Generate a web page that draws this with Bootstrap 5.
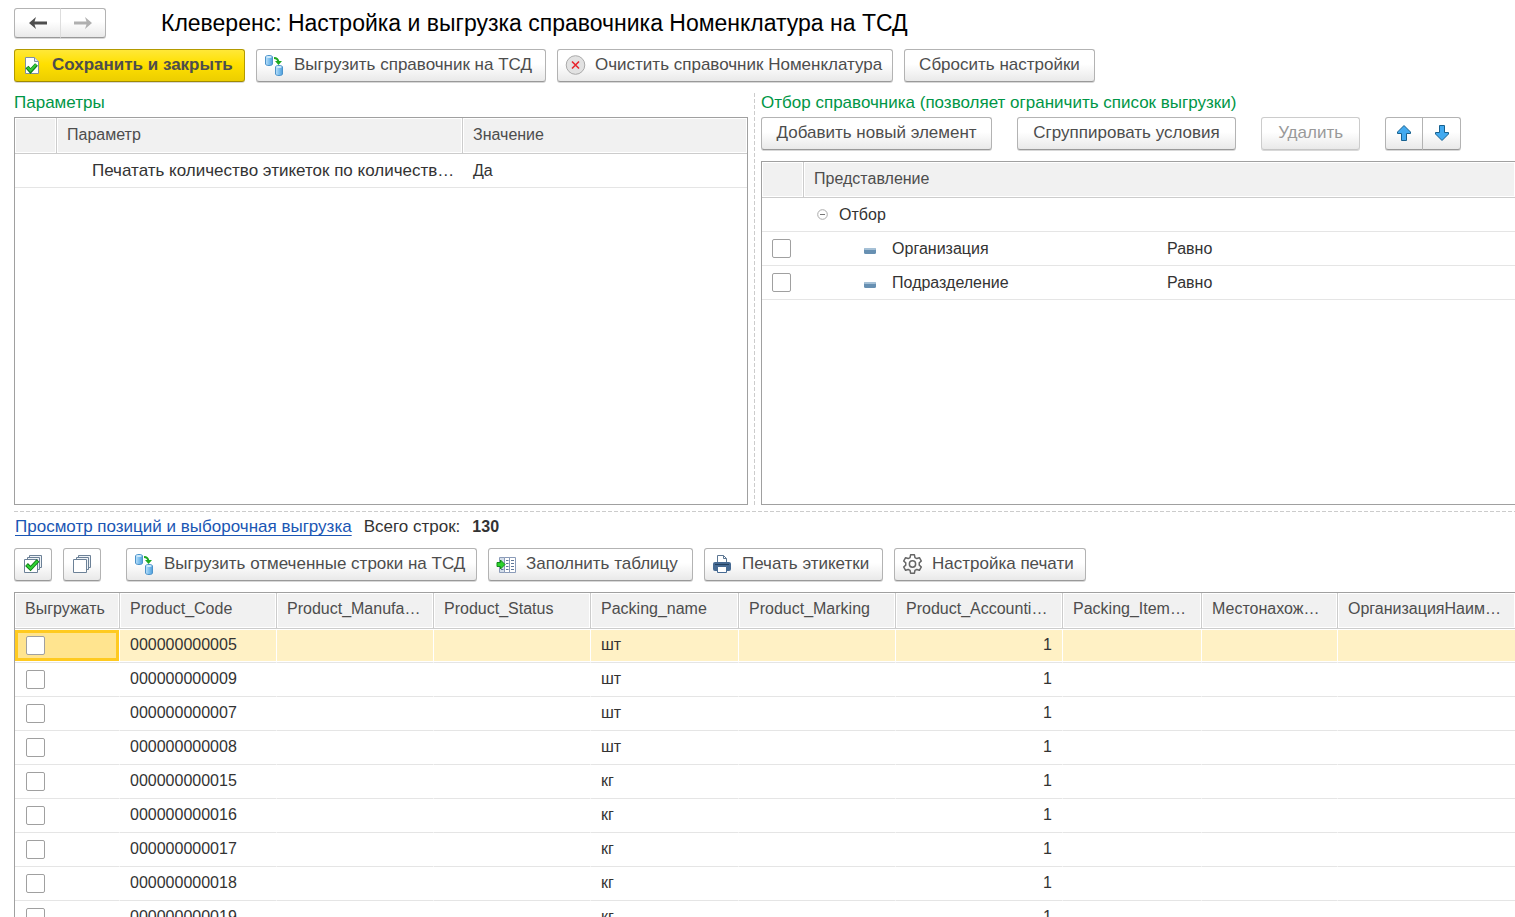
<!DOCTYPE html>
<html lang="ru">
<head>
<meta charset="utf-8">
<meta name="viewport" content="width=device-width, initial-scale=1">
<title>Клеверенс: Настройка и выгрузка справочника Номенклатура на ТСД</title>
<link href="https://cdn.jsdelivr.net/npm/bootstrap@5.3.0/dist/css/bootstrap.min.css" rel="stylesheet">
<style>
  body { font-family: "Liberation Sans", Arial, sans-serif; font-size: 16px; line-height: 20px; color: #333; background: #fff; }
  .page { padding: 8px 0 0 14px; }
  .page-title { font-size: 23px; line-height: 30px; color: #000; margin-left: 55px; }

  .btn-tool {
    --bs-btn-color: #4d4d4d; --bs-btn-hover-color: #333; --bs-btn-active-color: #333;
    --bs-btn-border-color: #b3b3b3; --bs-btn-hover-border-color: #999;
    --bs-btn-disabled-color: #999; --bs-btn-disabled-border-color: #ccc; --bs-btn-disabled-opacity: 1;
    --bs-btn-border-radius: 3px; --bs-btn-font-size: 17px; --bs-btn-line-height: 20px;
    --bs-btn-padding-x: 8px; --bs-btn-padding-y: 0;
    height: 33px; border-bottom-color: #999; padding-bottom: 1px;
    background: linear-gradient(#fff 45%, #e9e9e9);
    box-shadow: 0 1px 0 #d8d8d8;
    display: inline-flex; align-items: center; justify-content: center; white-space: nowrap;
  }
  .btn-tool:disabled { border-bottom-color: #c6c6c6; }
  .btn-tool svg { flex: none; }
  .with-icon { padding-left: 7px; gap: 9px; justify-content: flex-start; }
  .with-icon svg { width: 21px; height: 22px; }
  .btn-save { --bs-btn-color: #4d4d4d; --bs-btn-border-color: #b39a00; font-weight: 700; border-bottom-color: #a08a00; background: linear-gradient(#ffe838, #ffe000 45%, #ecce00); }
  .btn-nav { width: 47px; height: 30px; padding: 0; }
  .btn-nav + .btn-nav { width: 46px; border-left-color: #ddd; }
  .btn-square { width: 38px; padding: 0 0 1px; }
  .btn-group .btn-square + .btn-square { width: 39px; }
  .btn-square svg { width: 20px; height: 20px; }

  .w-a { min-width: 231px; } .w-b { min-width: 290px; } .w-c { min-width: 336px; } .w-d { min-width: 191px; }
  .w-f { min-width: 219px; } .w-g { min-width: 99px; }
  .w-h { min-width: 351px; } .w-i { min-width: 205px; } .w-j { min-width: 179px; } .w-k { min-width: 192px; }
  .main-tools { margin-top: 11px; }
  .gap-tool { gap: 11px; }
  .gap-wide { gap: 25px; }

  .panes { display: grid; grid-template-columns: 37fr 13px 38fr; margin-top: 11px; }
  .split-v { justify-self: center; width: 1px; background: repeating-linear-gradient(#ccc 0 4px, transparent 4px 6px); }
  .split-h { height: 1px; margin-top: 6px; background: repeating-linear-gradient(90deg, #ccc 0 4px, transparent 4px 6px); }
  .caption-green { color: #009646; font-size: 17px; margin-bottom: 4px; }
  .sheet { border: 1px solid #a0a0a0; overflow: hidden; }
  .sheet-right { border-right: 0; margin-top: 11px; }
  .sheet-params { min-height: 388px; }

  .grid-table { table-layout: fixed; width: 100%; margin: 0; border-collapse: separate; border-spacing: 0; color: #333; }
  .grid-table th, .grid-table td { padding: 0 10px; height: 34px; white-space: nowrap; overflow: hidden; text-overflow: ellipsis; border-bottom: 1px solid #e5e5e5; vertical-align: middle; }
  .grid-table th { height: 36px; padding-bottom: 2px; font-weight: 400; color: #4d4d4d; background: #f1f1f1; border-bottom-color: #ccc; border-right: 1px solid #ccc; box-shadow: inset 0 0 0 1px #fff; }
  .grid-table th:last-child { border-right: 0; }
  .grid-table td.tree-1 { padding-left: 13px; }
  .grid-table td.tree-2 { padding-left: 60px; }
  .grid-table td.indent { padding-left: 35px; padding-right: 0; font-size: 17px; }
  .tree-gap { gap: 11px; }
  .c-mark { width: 42px; }
  .c-param { width: 406px; }
  .c-field { width: 353px; }

  .items td { border-right: 1px solid #fff; }
  .items td:last-child { border-right: 0; }
  .items td:first-child { padding-left: 11px; }
  .items .picked td { background: #fff1c5; box-shadow: inset 0 -1px 0 #fff, inset 0 1px 0 #fff; }
  .items .picked td:first-child { background: #ffe48f; box-shadow: inset 0 1px 0 #fff, inset 0 -1px 0 #fff, inset 0 4px 0 #ffca20, inset 0 -4px 0 #ffca20, inset 0 0 0 3px #ffca20; }
  .items-box { border-bottom: 0; border-right: 0; margin-top: 11px; }
  .k1 { width: 105px; } .k2 { width: 157px; } .k3 { width: 148px; } .k4 { width: 167px; } .k5 { width: 139px; } .k6 { width: 136px; }

  .form-check-input.tick { display: block; float: none; margin: 0; width: 19px; height: 19px; border: 1px solid #a0a0a0; border-radius: 2px; background-color: #fff; }
  .view-link { color: #1a56b4; text-decoration: underline; text-underline-offset: 3px; text-decoration-skip-ink: none; }
  .summary { margin-top: 5px; padding-left: 1px; gap: 12px; font-size: 17px; }
  .summary strong { font-size: 16px; }
  .items-tools { margin-top: 11px; }
  .export-rows { margin-left: 14px; }
  @media (min-width: 1200px) { .page { height: 100vh; overflow: hidden; } }
</style>
</head>
<body>
<svg width="0" height="0" class="position-absolute" aria-hidden="true">
  <defs>
    <linearGradient id="blue" x1="0" x2="1"><stop offset="0" stop-color="#bfe2fa"/><stop offset=".5" stop-color="#7fc0ee"/><stop offset="1" stop-color="#4f9fdc"/></linearGradient>
    <symbol id="i-export" viewBox="0 0 21 22">
      <path d="M1.500 3c0-2 7-2 7 0v7c0 2-7 2-7 0z" fill="url(#blue)" stroke="#4c93ca"/>
      <ellipse cx="5" cy="3" rx="2.800" ry="1" fill="#d3ecfc"/>
      <path d="M11.500 13c0-2 7-2 7 0v7c0 2-7 2-7 0z" fill="url(#blue)" stroke="#4c93ca"/>
      <ellipse cx="15" cy="13" rx="2.800" ry="1" fill="#d3ecfc"/>
      <path d="M10 4c3 0 4 1 4.500 4" fill="none" stroke="#1fa81f" stroke-width="2"/>
      <path d="M11 7h7L14.500 11z" fill="#1fa81f"/>
    </symbol>
  </defs>
</svg>

<main class="page d-flex flex-column">
  <header class="d-flex align-items-center">
    <div class="btn-group" role="group" aria-label="Навигация">
      <button type="button" class="btn btn-tool btn-nav" aria-label="Назад"><svg width="18" height="14" viewBox="0 0 18 14"><path d="M0 7l7-6-1.500 4.500H18v3H5.500L7 13z" fill="#4d4d4d"/></svg></button>
      <button type="button" class="btn btn-tool btn-nav" aria-label="Вперед"><svg width="18" height="14" viewBox="0 0 18 14"><path d="M18 7l-7-6 1.500 4.500H0v3h12.500L11 13z" fill="#b0b0b0"/></svg></button>
    </div>
    <h1 class="page-title mb-0 fw-normal text-nowrap">Клеверенс: Настройка и выгрузка справочника Номенклатура на ТСД</h1>
  </header>

  <div class="d-flex flex-wrap gap-tool main-tools" role="toolbar">
    <button type="button" class="btn btn-tool btn-save with-icon w-a">
      <svg viewBox="0 0 21 22"><path d="M3.500 3.500h9l4 4v12h-13z" fill="#fff" stroke="#8090a0"/><path d="M12.500 3.500v4h4" fill="#dfe6ee" stroke="#8090a0"/><path d="M5 13l3.500 4 6-6.500" fill="none" stroke="#14801c" stroke-width="4"/><path d="M5.500 13.500l3 3 5.500-6" fill="none" stroke="#35c93c" stroke-width="2"/></svg>
      Сохранить и закрыть</button>
    <button type="button" class="btn btn-tool with-icon w-b"><svg><use href="#i-export"/></svg>Выгрузить справочник на ТСД</button>
    <button type="button" class="btn btn-tool with-icon w-c">
      <svg viewBox="0 0 21 22"><circle cx="10.500" cy="11" r="9.300" fill="#e2e2e2" stroke="#aaa"/><path d="M7 7.500l7 7m0-7l-7 7" stroke="#e8252d" stroke-width="1.600"/></svg>
      Очистить справочник Номенклатура</button>
    <button type="button" class="btn btn-tool w-d">Сбросить настройки</button>
  </div>

  <div class="panes">
    <section class="d-flex flex-column">
      <div class="caption-green">Параметры</div>
      <div class="sheet sheet-params flex-grow-1">
        <table class="grid-table">
          <colgroup><col class="c-mark"><col class="c-param"><col></colgroup>
          <thead><tr><th></th><th>Параметр</th><th>Значение</th></tr></thead>
          <tbody><tr><td></td><td class="indent">Печатать количество этикеток по количеств…</td><td>Да</td></tr></tbody>
        </table>
      </div>
    </section>
    <div class="split-v"></div>
    <section class="d-flex flex-column overflow-hidden">
      <div class="caption-green text-nowrap">Отбор справочника (позволяет ограничить список выгрузки)</div>
      <div class="d-flex gap-wide" role="toolbar">
        <button type="button" class="btn btn-tool w-a">Добавить новый элемент</button>
        <button type="button" class="btn btn-tool w-f">Сгруппировать условия</button>
        <button type="button" class="btn btn-tool w-g" disabled>Удалить</button>
        <div class="btn-group" role="group" aria-label="Порядок">
          <button type="button" class="btn btn-tool btn-square" aria-label="Вверх"><svg viewBox="0 0 20 20"><path d="M10 2.500l6.500 6.500v1.500h-4v7h-5v-7h-4V9z" fill="#42aaf0" stroke="#17618f"/></svg></button>
          <button type="button" class="btn btn-tool btn-square" aria-label="Вниз"><svg viewBox="0 0 20 20"><path d="M10 17.500l6.500-6.500V9.500h-4v-7h-5v7h-4V11z" fill="#42aaf0" stroke="#17618f"/></svg></button>
        </div>
      </div>
      <div class="sheet sheet-right flex-grow-1">
        <table class="grid-table">
          <colgroup><col class="c-mark"><col class="c-field"><col></colgroup>
          <thead><tr><th></th><th colspan="2">Представление</th></tr></thead>
          <tbody>
            <tr><td></td><td class="tree-1"><span class="d-flex align-items-center tree-gap"><svg width="11" height="11" viewBox="0 0 11 11"><circle cx="5.500" cy="5.500" r="4.800" fill="#fff" stroke="#aaa"/><path d="M3 5.500h5" stroke="#777"/></svg>Отбор</span></td><td></td></tr>
            <tr><td><input class="form-check-input tick" type="checkbox" aria-label="Организация"></td><td class="tree-2"><span class="d-flex align-items-center gap-3"><svg width="12" height="10" viewBox="0 0 12 10"><rect y="4" width="12" height="6" rx="1.500" fill="#6790b2"/><rect y="4" width="12" height="2" rx="1" fill="#a5c0d6"/></svg>Организация</span></td><td>Равно</td></tr>
            <tr><td><input class="form-check-input tick" type="checkbox" aria-label="Подразделение"></td><td class="tree-2"><span class="d-flex align-items-center gap-3"><svg width="12" height="10" viewBox="0 0 12 10"><rect y="4" width="12" height="6" rx="1.500" fill="#6790b2"/><rect y="4" width="12" height="2" rx="1" fill="#a5c0d6"/></svg>Подразделение</span></td><td>Равно</td></tr>
          </tbody>
        </table>
      </div>
    </section>
  </div>

  <div class="split-h"></div>

  <div class="d-flex summary">
    <a href="#" class="view-link">Просмотр позиций и выборочная выгрузка</a>
    <span>Всего строк:</span>
    <strong>130</strong>
  </div>

  <div class="d-flex flex-wrap gap-tool items-tools" role="toolbar">
    <button type="button" class="btn btn-tool btn-square" aria-label="Отметить все"><svg viewBox="0 0 20 20"><g fill="#eef2f6" stroke="#6c8197"><path d="M6.500 1.500h12v12h-12z"/><path d="M4.500 3.500h12v12h-12z"/><path d="M1.500 5.500h13v13h-13z" fill="#fff"/></g><path d="M3.500 10.500l4 4 7.500-8" fill="none" stroke="#117a17" stroke-width="4"/><path d="M4 11l3.500 3.500 7-7.500" fill="none" stroke="#2fd433" stroke-width="2"/></svg></button>
    <button type="button" class="btn btn-tool btn-square" aria-label="Снять отметки"><svg viewBox="0 0 20 20"><g fill="#eef2f6" stroke="#6c8197"><path d="M6.500 1.500h12v12h-12z"/><path d="M4.500 3.500h12v12h-12z"/><path d="M1.500 5.500h13v13h-13z" fill="#fff"/></g></svg></button>
    <button type="button" class="btn btn-tool with-icon w-h export-rows"><svg><use href="#i-export"/></svg>Выгрузить отмеченные строки на ТСД</button>
    <button type="button" class="btn btn-tool with-icon w-i">
      <svg viewBox="0 0 21 22"><path d="M3.500 4.500h5v15h-5z" fill="#d4deea" stroke="#8a9bb8"/><path d="M8.500 4.500h5v15h-5zM13.500 4.500h6v15h-6z" fill="#fff" stroke="#8a9bb8"/><path d="M10 7.500h2.500m2.500 0h3M10 10.500h2.500m2.500 0h3M10 13.500h2.500m2.500 0h3M10 16.500h2.500m2.500 0h3M5 16.500h2.500" stroke="#5f7799"/><path d="M1 9.500h3.500V7l4.500 4.500-4.500 4.500v-2.500H1z" fill="#2bd42b" stroke="#128a18"/></svg>
      Заполнить таблицу</button>
    <button type="button" class="btn btn-tool with-icon w-j">
      <svg viewBox="0 0 21 22"><path d="M5.500 10V2.500h6l3 3V10" fill="#fff" stroke="#5d7793"/><path d="M11.500 2.500v3h3" fill="none" stroke="#5d7793"/><rect x="1" y="9" width="18" height="9" rx="2" fill="#466a93"/><path d="M3 11.500h14" stroke="#23405f"/><path d="M5.500 13.500h9v6h-9z" fill="#fff" stroke="#466a93"/></svg>
      Печать этикетки</button>
    <button type="button" class="btn btn-tool with-icon w-k">
      <svg viewBox="0 0 24 24" fill="none" stroke="#666" stroke-width="1.700" stroke-linejoin="round"><path d="M9.800 1.500h4.400l.6 3.100 2.100 1.200 3-1 2.200 3.800-2.400 2.100v2.600l2.400 2.100-2.200 3.800-3-1-2.100 1.200-.6 3.100H9.800l-.6-3.100-2.100-1.200-3 1-2.200-3.800 2.400-2.100v-2.600L1.900 8.600l2.200-3.800 3 1 2.100-1.200z"/><circle cx="12" cy="12" r="3.600"/></svg>
      Настройка печати</button>
  </div>

  <div class="sheet items-box flex-grow-1">
    <table class="grid-table items">
      <colgroup><col class="k1"><col class="k2"><col class="k2"><col class="k2"><col class="k3"><col class="k2"><col class="k4"><col class="k5"><col class="k6"><col></colgroup>
      <thead><tr><th>Выгружать</th><th>Product_Code</th><th>Product_Manufa…</th><th>Product_Status</th><th>Packing_name</th><th>Product_Marking</th><th>Product_Accounti…</th><th>Packing_Item…</th><th>Местонахож…</th><th>ОрганизацияНаим…</th></tr></thead>
      <tbody id="rows"></tbody>
    </table>
  </div>
</main>

<script src="https://cdn.jsdelivr.net/npm/bootstrap@5.3.0/dist/js/bootstrap.bundle.min.js"></script>
<script>
  const items = [['000000000005','шт'],['000000000009','шт'],['000000000007','шт'],['000000000008','шт'],['000000000015','кг'],['000000000016','кг'],['000000000017','кг'],['000000000018','кг'],['000000000019','кг']];
  document.getElementById('rows').innerHTML = items.map(([code, unit], i) =>
    `<tr class="${i ? '' : 'picked'}"><td><input class="form-check-input tick" type="checkbox" aria-label="${code}"></td><td>${code}</td><td></td><td></td><td>${unit}</td><td></td><td class="text-end">1</td><td></td><td></td><td></td></tr>`).join('');
</script>
</body>
</html>
